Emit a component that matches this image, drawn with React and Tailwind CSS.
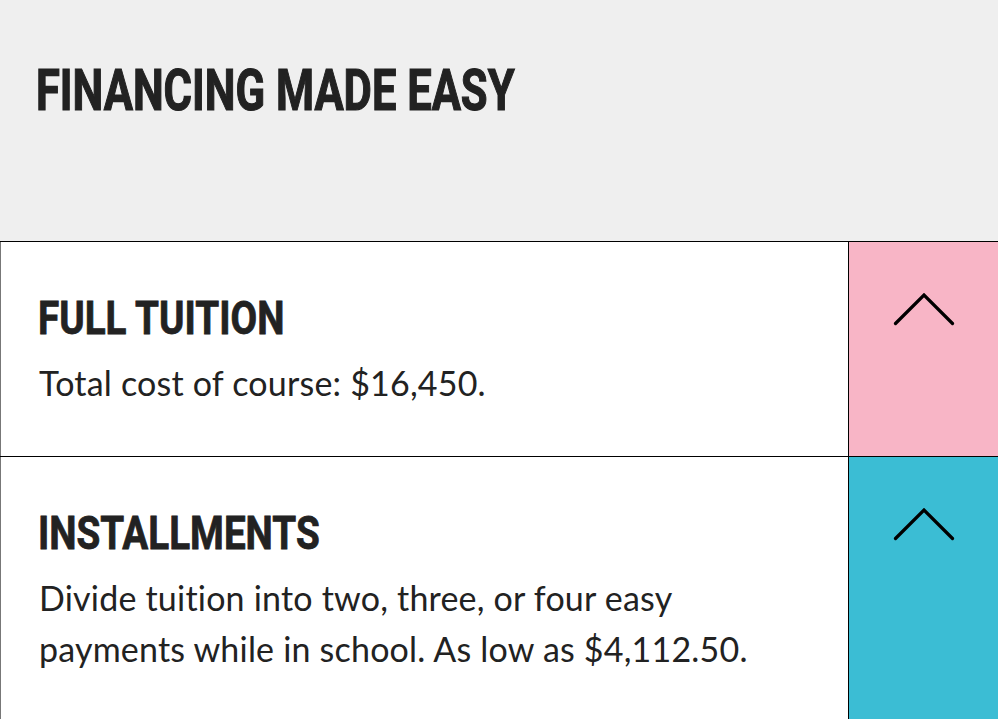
import React from "react";

const Chevron = () => (
  <svg width="62" height="33" viewBox="0 0 62 33" fill="none">
    <polyline
      points="2.5,30.5 31,2 59.5,30.5"
      stroke="#000"
      strokeWidth="3.2"
      strokeLinecap="round"
      strokeLinejoin="miter"
    />
  </svg>
);

const plans = [
  {
    title: "FULL TUITION",
    text: "Total cost of course: $16,450.",
    color: "bg-[#f8b5c6]",
  },
  {
    title: "INSTALLMENTS",
    text: "Divide tuition into two, three, or four easy payments while in school. As low as $4,112.50.",
    color: "bg-[#3bbdd4]",
  },
];

const App = () => {
  return (
    <div className="w-full min-h-screen bg-white text-[#222]">
      <div className="h-[241px] bg-[#efefef] pl-[36px] pr-[38px] pt-[61px]">
        <h1 className="inline-block origin-left scale-x-[0.75] whitespace-nowrap font-['Roboto',sans-serif] font-bold text-[58px] leading-none [-webkit-text-stroke:1.2px_#222]">
          FINANCING MADE EASY
        </h1>
      </div>
      <div className="border-t border-black">
        {plans.map((plan) => (
          <div key={plan.title} className="flex border-b border-black">
            <div className="flex-1 border-l border-l-[#777] border-r border-r-black px-[38px] pt-[53px] pb-[48px]">
              <h2 className="-ml-[1px] inline-block origin-left scale-x-[0.84] whitespace-nowrap font-['Roboto',sans-serif] font-bold text-[46px] leading-none [-webkit-text-stroke:0.8px_#222]">
                {plan.title}
              </h2>
              <p className="mt-[16px] max-w-[750px] font-['Lato',sans-serif] text-[34px] leading-[51px] tracking-[0.2px]">
                {plan.text}
              </p>
            </div>
            <div className={`w-[149px] flex justify-center pt-[51px] ${plan.color}`}>
              <Chevron />
            </div>
          </div>
        ))}
      </div>
    </div>
  );
};

export default App;
